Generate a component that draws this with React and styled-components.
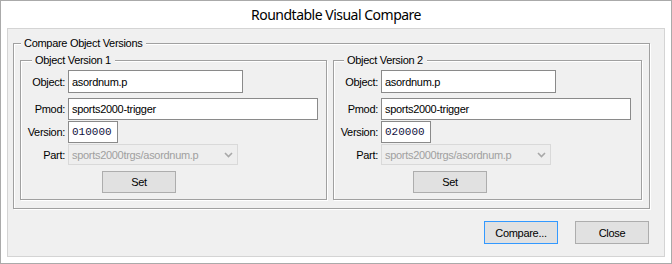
import styled, { createGlobalStyle } from "styled-components";

const GlobalStyle = createGlobalStyle`
  html, body {
    margin: 0;
    padding: 0;
    background: #ffffff;
  }
  body {
    font-family: "Liberation Sans", Arial, sans-serif;
    font-size: 11px;
    color: #000;
  }
`;

const Window = styled.div`
  width: 672px;
  height: 264px;
  box-sizing: border-box;
  border: 1px solid #aaaaaa;
  background: #ffffff;
  padding: 0 6px 6px;
  display: flex;
  flex-direction: column;
`;

const TitleBar = styled.div`
  height: 27px;
  line-height: 28px;
  text-align: center;
  font-family: "Noto Sans", "Open Sans", sans-serif;
  font-size: 14px;
  letter-spacing: -0.5px;
  color: #000;
`;

const Client = styled.div`
  flex: 1;
  border: 1px solid #d4d4d4;
  background: #f0f0f0;
  padding: 14px 0 0 5px;
  display: flex;
  flex-direction: column;
`;

const GroupBox = styled.div`
  position: relative;
  box-sizing: border-box;
  width: ${(p) => p.$width}px;
  height: ${(p) => p.$height}px;
  border: 1px solid #a0a0a0;
  box-shadow: inset 1px 1px 0 #ffffff, 1px 1px 0 #ffffff;
  padding: ${(p) => p.$pad};
`;

const Caption = styled.span`
  position: absolute;
  top: -7px;
  left: ${(p) => p.$left}px;
  padding: 0 4px 0 3px;
  line-height: 13px;
  letter-spacing: -0.3px;
  background: #f0f0f0;
  white-space: nowrap;
`;

const Panels = styled.div`
  display: flex;
  gap: 6px;
`;

const FieldRow = styled.div`
  display: grid;
  grid-template-columns: 44px auto;
  column-gap: 3px;
  align-items: center;
  height: ${(p) => p.$h}px;
  margin-top: ${(p) => p.$mt || 0}px;
`;

const Label = styled.label`
  text-align: right;
  letter-spacing: -0.3px;
  white-space: nowrap;
`;

const TextBox = styled.div`
  box-sizing: border-box;
  width: ${(p) => p.$w}px;
  height: 100%;
  border: 1px solid #8a8a8a;
  background: #ffffff;
  padding: 0 3px;
  display: flex;
  align-items: center;
  letter-spacing: ${(p) => (p.$mono ? "0" : "-0.3px")};
  font-family: ${(p) =>
    p.$mono ? '"Liberation Mono", "Courier New", monospace' : "inherit"};
  color: ${(p) => (p.$mono ? "#121240" : "#000")};
  white-space: nowrap;
`;

const Combo = styled.div`
  box-sizing: border-box;
  width: ${(p) => p.$w}px;
  height: 100%;
  border: 1px solid #d9d9d9;
  background: #eeeeee;
  padding: 0 4px 0 3px;
  display: flex;
  align-items: center;
  justify-content: space-between;
  color: #a0a0a0;
  letter-spacing: -0.3px;
  white-space: nowrap;
`;

const Button = styled.button`
  box-sizing: border-box;
  width: 74px;
  height: 100%;
  margin: 0;
  padding: 0;
  border: 1px solid ${(p) => (p.$default ? "#3399ff" : "#adadad")};
  background: #e1e1e1;
  font-family: inherit;
  font-size: 11px;
  letter-spacing: -0.3px;
  color: #000;
`;

const SetCell = styled.div`
  grid-column: 2;
  height: 100%;
  margin-left: ${(p) => p.$offset}px;
`;

const ButtonBar = styled.div`
  display: flex;
  justify-content: flex-end;
  gap: 17px;
  height: 23px;
  margin-top: 12px;
  padding-right: 15px;
`;

function Chevron() {
  return (
    <svg width="9" height="6" viewBox="0 0 9 6">
      <polyline
        points="1,1 4.5,4.5 8,1"
        fill="none"
        stroke="#a8a8a8"
        strokeWidth="1.6"
      />
    </svg>
  );
}

function VersionPanel({ n, width, version, setOffset }) {
  return (
    <GroupBox $width={width} $height={140} $pad="9px 0 0 0">
      <Caption $left={n === 1 ? 11 : 10}>Object Version {n}</Caption>
      <FieldRow $h={23}>
        <Label>Object:</Label>
        <TextBox $w={175}>asordnum.p</TextBox>
      </FieldRow>
      <FieldRow $h={22} $mt={5}>
        <Label>Pmod:</Label>
        <TextBox $w={250}>sports2000-trigger</TextBox>
      </FieldRow>
      <FieldRow $h={22} $mt={1}>
        <Label>Version:</Label>
        <TextBox $w={50} $mono>
          {version}
        </TextBox>
      </FieldRow>
      <FieldRow $h={21} $mt={1}>
        <Label>Part:</Label>
        <Combo $w={170}>
          <span>sports2000trgs/asordnum.p</span>
          <Chevron />
        </Combo>
      </FieldRow>
      <FieldRow $h={22} $mt={6}>
        <SetCell $offset={setOffset}>
          <Button>Set</Button>
        </SetCell>
      </FieldRow>
    </GroupBox>
  );
}

export default function App() {
  return (
    <>
      <GlobalStyle />
      <Window>
        <TitleBar>Roundtable Visual Compare</TitleBar>
        <Client>
          <GroupBox $width={637} $height={166} $pad="16px 0 0 6px">
            <Caption $left={7}>Compare Object Versions</Caption>
            <Panels>
              <VersionPanel n={1} width={307} version="010000" setOffset={34} />
              <VersionPanel n={2} width={309} version="020000" setOffset={32} />
            </Panels>
          </GroupBox>
          <ButtonBar>
            <Button $default>Compare...</Button>
            <Button>Close</Button>
          </ButtonBar>
        </Client>
      </Window>
    </>
  );
}
